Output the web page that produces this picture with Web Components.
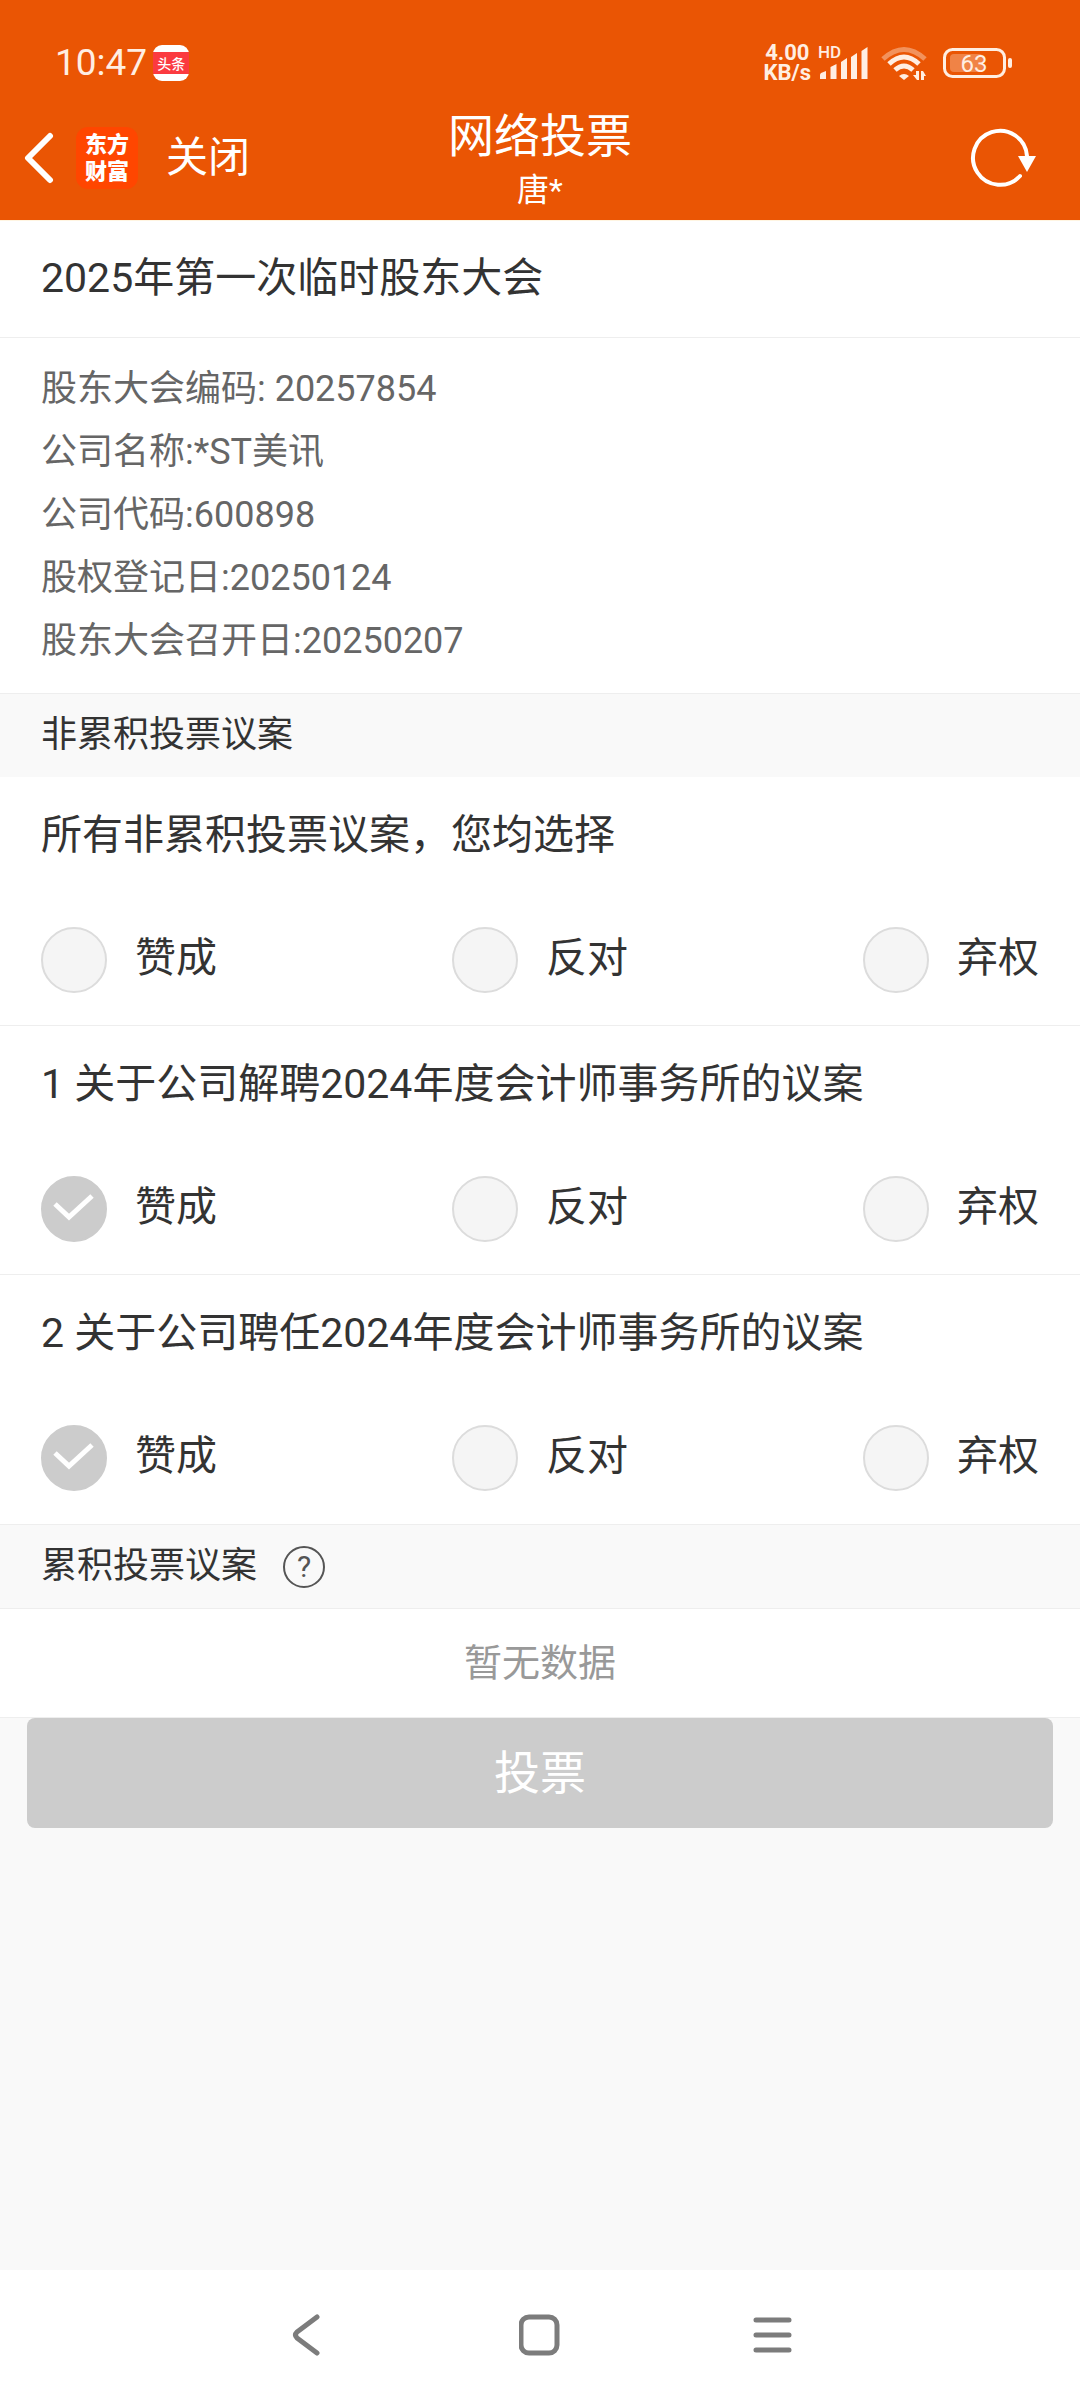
<!DOCTYPE html>
<html lang="zh-CN">
<head>
<meta charset="utf-8">
<meta name="viewport" content="width=device-width, initial-scale=1">
<title>网络投票</title>
<style>
  body { margin: 0; background: #f9f9f9; color: #333; font-family: Roboto, "Noto Sans CJK SC", sans-serif; }
</style>
</head>
<body>
<vote-app></vote-app>
<script>
const BASE = `
  *, *::before { box-sizing: border-box; }
  h1, h2, p { margin: 0; font-weight: 400; }
  button, a { font: inherit; color: inherit; background: none; border: 0; padding: 0; margin: 0; text-decoration: none; }
  svg { display: block; flex: none; }
`;

function define(name, css, html) {
  customElements.define(name, class extends HTMLElement {
    constructor() {
      super();
      this.attachShadow({ mode: 'open' }).innerHTML = `<style>${BASE}${css}</style>${html}`;
    }
  });
}

// Phone status bar: clock, network speed, signal, wifi, battery
define('status-bar', `
  :host { display: flex; align-items: center; justify-content: space-between; box-sizing: border-box; height: 96px; padding: 30px 67px 0 55px; color: #ffeee2; }
  .side { display: flex; align-items: center; }
  .left { gap: 6px; }
  time { font-size: 37px; line-height: 40px; }
  .news { display: grid; place-items: center; width: 36px; height: 36px; border-radius: 9px; color: #fff; font-size: 14px; font-weight: 500;
          background: linear-gradient(#fff 7px, #fb3a40 7px 29px, #fff 29px); }
  .speed { font-size: 22px; font-weight: 700; line-height: 20px; text-align: center; margin-right: 7px; }
  .signal { margin-right: 13px; }
  .wifi { margin-right: 15px; }
  .hd { font-size: 17px; font-weight: 500; }
  .level { font-size: 24px; }
`, `
  <div class="side left"><time>10:47</time><span class="news">头条</span></div>
  <div class="side">
    <div class="speed">4.00<br>KB/s</div>
    <svg class="signal" width="50" height="48" viewBox="0 -6 50 48" fill="currentColor">
      <text class="hd" x="0" y="13">HD</text>
      <path d="M2 34v-4q0-1 1-2l5-2v8zM12.500 34V22l6-3v15zM23 34V17l6-4v21zM33 34V12l6-4v26zM43.500 34V6l6-4v32z"/>
    </svg>
    <svg class="wifi" width="47" height="36" viewBox="0 0 47 36" fill="none" stroke="currentColor" stroke-width="5">
      <path d="M2 14Q23 -5 44 14" opacity=".4"/>
      <path d="M8 19Q23 5 38 19"/>
      <path d="M14 25Q23 17 32 25"/>
      <path d="M18 31q5-4 10 0l-5 4z" fill="currentColor" stroke="none"/>
      <path d="M38 26v9h-2l-4-5h3v-4zM40 35v-9h2l3 5h-2v4z" fill="currentColor" stroke="none"/>
    </svg>
    <svg width="70" height="32" viewBox="0 0 70 32" fill="currentColor">
      <rect x="1.500" y="2.500" width="60" height="27" rx="8" fill="none" stroke="currentColor" stroke-width="3"/>
      <rect x="7" y="7" width="33" height="18" rx="4" opacity=".3"/>
      <rect x="65" y="11" width="4" height="10" rx="2"/>
      <text class="level" x="31" y="25" text-anchor="middle">63</text>
    </svg>
  </div>
`);

define('app-header', `
  :host { display: grid; grid-template-columns: 1fr auto 1fr; align-items: center; box-sizing: border-box; height: 124px; padding: 0 22px; color: #fff; }
  .left { display: flex; align-items: center; }
  .logo { display: grid; place-content: center; width: 62px; height: 62px; margin: 0 28px 0 22px; border-radius: 12px; background: #ff4600;
          font-size: 22px; font-weight: 900; line-height: 27px; }
  .close { font-size: 42px; line-height: 60px; }
  .title { padding-top: 6px; text-align: center; }
  h1 { font-size: 46px; line-height: 58px; }
  p { font-size: 32px; line-height: 50px; }
  .refresh { justify-self: end; margin-right: 22px; }
`, `
  <div class="left">
    <button aria-label="返回"><svg width="32" height="56" viewBox="0 0 32 56" fill="none" stroke="currentColor" stroke-width="6" stroke-linecap="round" stroke-linejoin="round"><path d="M28 6L6 28l22 22"/></svg></button>
    <a class="logo" href="#"><span>东方<br>财富</span></a>
    <button class="close">关闭</button>
  </div>
  <div class="title"><h1><slot></slot></h1><p><slot name="user"></slot></p></div>
  <button class="refresh" aria-label="刷新"><svg width="68" height="60" viewBox="0 0 68 60"><path d="M52 48A27 27 0 1 1 59 28" fill="none" stroke="#fff" stroke-width="4" stroke-linecap="round"/><path d="M50 28h18l-9 16z" fill="#fff"/></svg></button>
`);

define('meeting-info', `
  :host { display: block; background: #fff; border-top: 1px solid #fff5e2; font-size: 36px; line-height: 63px; color: #666; }
  h2 { padding: 27px 41px 29px; border-bottom: 1px solid #eee; font-size: 41px; line-height: 60px; color: #333; }
  .rows { padding: 20px 41px; }
`, `<h2><slot name="title"></slot></h2><div class="rows"><slot></slot></div>`);

define('section-bar', `
  :host { display: flex; align-items: center; gap: 26px; box-sizing: border-box; height: 84px; padding: 0 41px; border-top: 1px solid #eee; font-size: 36px; }
  :host([ruled]) { border-bottom: 1px solid #eee; height: 85px; }
  .text { padding-bottom: 10px; }
`, `<span class="text"><slot></slot></span><slot name="help"></slot>`);

define('help-button', `
  :host { display: block; color: #555; }
  button { display: grid; place-items: center; width: 42px; height: 42px; border: 2px solid currentColor; border-radius: 50%; font-size: 30px; line-height: 38px; }
`, `<button aria-label="帮助">?</button>`);

// One proposal with its three choices
customElements.define('vote-item', class extends HTMLElement {
  constructor() {
    super();
    const choice = (value, text) => `
      <label>
        <span class="mark">
          <input type="radio" name="vote" value="${value}" ${this.getAttribute('value') === value ? 'checked' : ''}>
          <svg width="66" height="66" viewBox="0 0 66 66" fill="none" stroke="#fff" stroke-width="5"><path d="M14 28l14 13 23-21"/></svg>
        </span>
        <span class="text">${text}</span>
      </label>`;
    this.attachShadow({ mode: 'open' }).innerHTML = `
      <style>${BASE}
        :host { display: block; padding: 28px 41px 32px; background: #fff; border-bottom: 1px solid #eee; font-size: 41px; line-height: 60px; }
        :host([last]) { border-color: #fff; }
        h2 { font-size: 41px; }
        .choices { display: flex; justify-content: space-between; margin-top: 62px; }
        label { display: flex; align-items: center; gap: 28px; }
        .mark { display: grid; }
        .mark > * { grid-area: 1 / 1; }
        input { appearance: none; width: 66px; height: 66px; margin: 0; border: 2px solid #dcdcdc; border-radius: 50%; background: #f5f5f5; }
        input:checked { border-color: #ccc; background: #ccc; }
        svg { visibility: hidden; pointer-events: none; }
        input:checked + svg { visibility: visible; }
        .text { padding-bottom: 4px; }
      </style>
      <h2><slot></slot></h2>
      <div class="choices" role="radiogroup">${choice('for', '赞成')}${choice('against', '反对')}${choice('abstain', '弃权')}</div>`;
  }
});

define('empty-note', `
  :host { display: block; padding: 24px 0; background: #fff; border-bottom: 1px solid #eee; text-align: center; font-size: 38px; line-height: 60px; color: #999; }
`, `<slot></slot>`);

define('submit-button', `
  :host { display: block; padding: 0 27px; }
  button { width: 100%; height: 110px; padding-bottom: 8px; border-radius: 8px; background: #ccc; color: #fff; font-size: 46px; }
`, `<button><slot></slot></button>`);

define('system-nav', `
  :host { display: flex; box-sizing: border-box; height: 130px; padding: 0 190px; background: #fff; color: #7c7c7c; }
  button { flex: 1; display: grid; place-items: center; }
  svg { fill: none; stroke: currentColor; stroke-width: 5; stroke-linecap: round; stroke-linejoin: round; }
`, `
  <button aria-label="返回"><svg width="42" height="42" viewBox="0 0 42 42"><path d="M31 3L11 18q-3 3 0 6l20 15"/></svg></button>
  <button aria-label="主页"><svg width="42" height="42" viewBox="0 0 42 42"><rect x="2" y="3" width="36" height="36" rx="8"/></svg></button>
  <button aria-label="菜单"><svg width="42" height="42" viewBox="0 0 42 42"><path d="M4 6h33M4 21h33M4 36h33"/></svg></button>
`);

define('vote-app', `
  :host { display: flex; flex-direction: column; min-height: 100vh; }
  header { background: #ea5504; }
  main { flex: 1; }
`, `
  <header>
    <status-bar></status-bar>
    <app-header>网络投票<span slot="user">唐*</span></app-header>
  </header>
  <main>
    <meeting-info>
      <span slot="title">2025年第一次临时股东大会</span>
      <p>股东大会编码: 20257854</p>
      <p>公司名称:*ST美讯</p>
      <p>公司代码:600898</p>
      <p>股权登记日:20250124</p>
      <p>股东大会召开日:20250207</p>
    </meeting-info>
    <section-bar>非累积投票议案</section-bar>
    <vote-item>所有非累积投票议案，您均选择</vote-item>
    <vote-item value="for">1 关于公司解聘2024年度会计师事务所的议案</vote-item>
    <vote-item value="for" last>2 关于公司聘任2024年度会计师事务所的议案</vote-item>
    <section-bar ruled>累积投票议案<help-button slot="help"></help-button></section-bar>
    <empty-note>暂无数据</empty-note>
    <submit-button>投票</submit-button>
  </main>
  <system-nav></system-nav>
`);
</script>
</body>
</html>
